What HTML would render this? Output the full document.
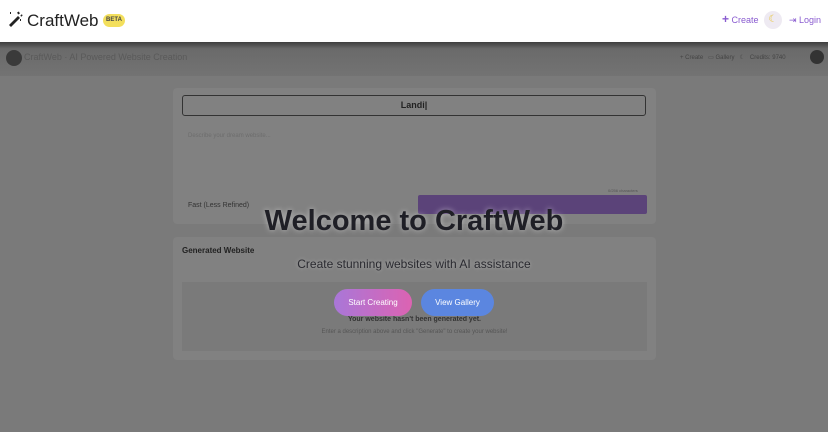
<!DOCTYPE html><html><head><style>
body{margin:0;width:828px;height:432px;overflow:hidden;background:#7a7a7a;font-family:"Liberation Sans",sans-serif;position:relative}
.a{position:absolute}
.top{left:0;top:0;width:828px;height:42px;background:#fff}
</style></head><body>
<div class="a top"></div>
<div class="a" style="left:7px;top:11px;font-size:17px;color:#222;white-space:nowrap">
<svg width="16" height="16" viewBox="0 0 16 16" style="vertical-align:-1px"><path d="M2 14L11 5l2 2-9 9z" fill="#222"/><path d="M3 2l1 0M11 1l1 2M14 4l1 1M13 9l1 0" stroke="#222" stroke-width="2"/></svg><span style="margin-left:4px">CraftWeb</span></div>
<div class="a" style="left:103px;top:14px;width:22px;height:13px;border-radius:7px;background:#f3df5c;font-size:6px;font-weight:bold;line-height:13px;text-align:center;color:#444">BETA</div>
<div class="a" style="left:722px;top:15px;font-size:9px;color:#8a5cd0;white-space:nowrap"><b style="font-size:12px;line-height:9px">+</b> Create</div>
<div class="a" style="left:764px;top:11px;width:18px;height:18px;border-radius:9px;background:#eeeaf2;font-size:10px;line-height:18px;text-align:center;color:#e7c43b">☾</div>
<div class="a" style="left:789px;top:15px;font-size:9px;color:#8a5cd0">⇥ Login</div>
<div class="a" style="left:0;top:42px;width:828px;height:34px;background:linear-gradient(#3e3e3e,#6a6a6a 20%,#737373)"></div>
<div class="a" style="left:6px;top:50px;width:16px;height:16px;border-radius:8px;background:#3a3a3a"></div>
<div class="a" style="left:24px;top:52px;font-size:9px;color:#5a5a5a">CraftWeb · AI Powered Website Creation</div>
<div class="a" style="left:680px;top:54px;font-size:6px;color:#444">+ Create &nbsp; ▭ Gallery &nbsp; ☾ &nbsp; Credits: 9740</div>
<div class="a" style="left:810px;top:50px;width:14px;height:14px;border-radius:7px;background:#333"></div>
<div class="a" style="left:173px;top:88px;width:483px;height:136px;background:#818181;border-radius:4px"></div>
<div class="a" style="left:182px;top:95px;width:462px;height:19px;border:1.5px solid #333;border-radius:3px;font-size:9px;font-weight:bold;text-align:center;line-height:19px;color:#222">Landi|</div>
<div class="a" style="left:188px;top:133px;font-size:6px;color:#6d6d6d">Describe your dream website...</div>
<div class="a" style="left:608px;top:188px;font-size:4px;color:#555">0/256 characters</div>
<div class="a" style="left:188px;top:202px;font-size:7px;color:#333">Fast (Less Refined)</div>
<div class="a" style="left:418px;top:195px;width:229px;height:19px;background:#5b4379;border-radius:2px"></div>
<div class="a" style="left:173px;top:237px;width:483px;height:123px;background:#818181;border-radius:4px"></div>
<div class="a" style="left:182px;top:246px;font-size:8px;font-weight:bold;color:#222">Generated Website</div>
<div class="a" style="left:182px;top:282px;width:465px;height:69px;background:#7a7a7a"></div>
<div class="a" style="left:182px;top:316px;width:465px;text-align:center;font-size:7px;font-weight:bold;color:#333">Your website hasn't been generated yet.</div>
<div class="a" style="left:182px;top:329px;width:465px;text-align:center;font-size:6px;color:#555">Enter a description above and click "Generate" to create your website!</div>
<div class="a" style="left:0;top:205px;width:828px;text-align:center;font-size:29px;font-weight:bold;color:#1f1f26;text-shadow:0 0 6px rgba(255,255,255,.5)">Welcome to CraftWeb</div>
<div class="a" style="left:0;top:257px;width:828px;text-align:center;font-size:12px;color:#2a2a30;text-shadow:0 0 4px rgba(255,255,255,.4)">Create stunning websites with AI assistance</div>
<div class="a" style="left:334px;top:289px;width:78px;height:27px;border-radius:14px;background:linear-gradient(90deg,#a977d8,#dc63b2);color:#fff;font-size:8px;line-height:27px;text-align:center">Start Creating</div>
<div class="a" style="left:421px;top:289px;width:73px;height:27px;border-radius:14px;background:#5b86e0;color:#fff;font-size:8px;line-height:27px;text-align:center">View Gallery</div>
</body></html>
